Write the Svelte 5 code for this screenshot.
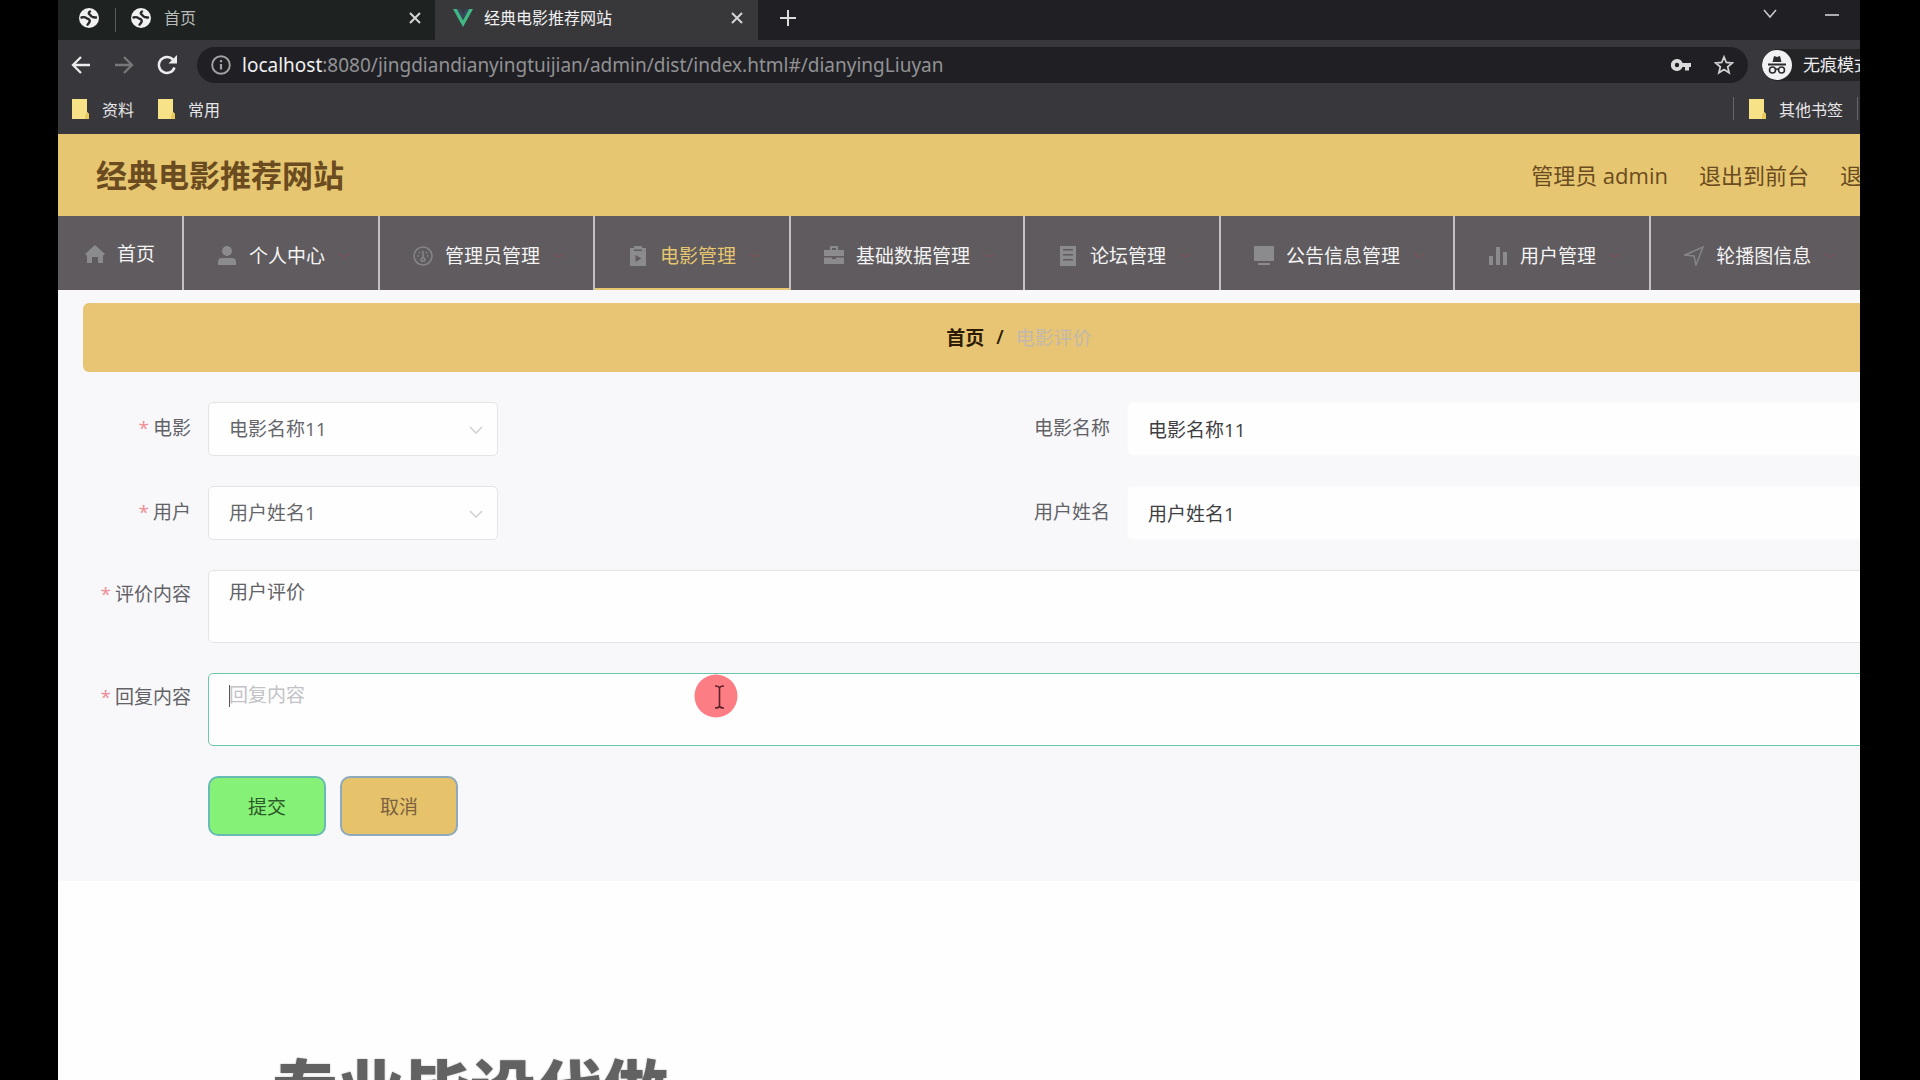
<script>
  const menu = [
    { label: '个人中心', icon: 'user' },
    { label: '管理员管理', icon: 'gauge' },
    { label: '电影管理', icon: 'film', active: true },
    { label: '基础数据管理', icon: 'case' },
    { label: '论坛管理', icon: 'list' },
    { label: '公告信息管理', icon: 'screen' },
    { label: '用户管理', icon: 'bars' },
    { label: '轮播图信息', icon: 'plane' }
  ];
  let movieName = $state('电影名称11');
  let userName = $state('用户姓名1');
  let review = $state('用户评价');
  let reply = $state('');
</script>

{#snippet globe()}
  <svg class="globe" viewBox="0 0 20 20" aria-hidden="true">
    <circle cx="10" cy="10" r="10" fill="#f1f1f2" />
    <path d="M2.500 9.500c2-.6 3.800-.4 5 .6 1.200 1 2.900.9 3.200 2.300.3 1.500-.8 2.800-2.200 4.300M11 3.500c-1.400.8-1.600 2-.6 2.800 1.300.9 1.600 2.500 3.300 2.700 1.300.1 2 .6 3.300.5" fill="none" stroke="#27292a" stroke-width="2.400" stroke-linecap="round" stroke-linejoin="round" />
  </svg>
{/snippet}

{#snippet folder()}
  <svg class="folder" viewBox="0 0 17 20" aria-hidden="true">
    <path d="M0 0h15v13l2 2v5H0z" fill="#f8e287" />
    <path d="M13 20v-4l2-3 2 2v5z" fill="#e8c95c" />
  </svg>
{/snippet}

{#snippet cross()}
  <svg class="cross" viewBox="0 0 12 12" aria-hidden="true"><path d="M1 1l10 10M11 1L1 11" /></svg>
{/snippet}

<div class="stage">
  <div class="browser">
    <div class="tabs">
      <div class="tab pinned">{@render globe()}</div>
      <div class="tab idle">
        {@render globe()}
        <span class="tab-title">首页</span>
        <button class="plain" aria-label="关闭标签页">{@render cross()}</button>
      </div>
      <div class="tab current">
        <svg class="vue" viewBox="0 0 20 18" aria-hidden="true">
          <path d="M0 0h4l6 11 6-11h4L10 18z" fill="#41b883" />
          <path d="M4 0h3l3 5.500L13 0h3l-6 11z" fill="#35495e" />
        </svg>
        <span class="tab-title">经典电影推荐网站</span>
        <button class="plain" aria-label="关闭标签页">{@render cross()}</button>
      </div>
      <button class="plain new-tab" aria-label="新标签页">
        <svg width="16" height="16" viewBox="0 0 16 16"><path d="M8 0v16M0 8h16" stroke="#dcdcde" stroke-width="2" /></svg>
      </button>
      <div class="window-buttons">
        <button class="plain" aria-label="搜索标签页">
          <svg width="14" height="10" viewBox="0 0 14 10"><path d="M1 1l6 7 6-7" fill="none" stroke="#c9c9cc" stroke-width="1.500" /></svg>
        </button>
        <button class="plain" aria-label="最小化">
          <svg width="14" height="10" viewBox="0 0 14 10"><path d="M0 6h14" stroke="#dcdcde" stroke-width="1.500" /></svg>
        </button>
      </div>
    </div>

    <div class="toolbar">
      <div class="nav-buttons">
        <button class="plain" aria-label="后退">
          <svg width="20" height="20" viewBox="0 0 20 20"><path d="M19 10H2M10 2l-8 8 8 8" fill="none" stroke="#ececee" stroke-width="2.300" /></svg>
        </button>
        <button class="plain" aria-label="前进">
          <svg width="20" height="20" viewBox="0 0 20 20"><path d="M1 10h17M10 2l8 8-8 8" fill="none" stroke="#77777a" stroke-width="2.300" /></svg>
        </button>
        <button class="plain" aria-label="重新加载">
          <svg width="20" height="20" viewBox="0 0 20 20"><path d="M17.500 12.500A8 8 0 1 1 16 4.700" fill="none" stroke="#ececee" stroke-width="2.500" /><path d="M20 0v8.500h-8.500z" fill="#ececee" /></svg>
        </button>
      </div>
      <div class="address">
        <svg width="20" height="20" viewBox="0 0 20 20" aria-hidden="true"><circle cx="10" cy="10" r="8.800" fill="none" stroke="#a2a2a5" stroke-width="1.900" /><path d="M10 9v5.500M10 5v2.200" stroke="#a2a2a5" stroke-width="2.200" /></svg>
        <div class="url"><b>localhost</b>:8080/jingdiandianyingtuijian/admin/dist/index.html#/dianyingLiuyan</div>
        <svg class="key" width="20" height="12" viewBox="0 0 20 12" aria-hidden="true"><path d="M6 0a6 6 0 1 0 5.500 8H14v3.500h4V8h2V4h-8.500A6 6 0 0 0 6 0zm0 3.800a2.200 2.200 0 1 1 0 4.400 2.200 2.200 0 0 1 0-4.400z" fill="#dadadc" fill-rule="evenodd" /></svg>
        <svg width="20" height="20" viewBox="0 0 20 20" aria-hidden="true"><path d="M10 2l2.300 5.500 6 .5-4.600 3.900 1.400 5.900-5.100-3.200-5.100 3.200 1.400-5.900L1.700 8l6-.5z" fill="none" stroke="#cfcfd2" stroke-width="1.800" /></svg>
      </div>
      <div class="incognito">
        <svg width="30" height="30" viewBox="0 0 30 30" aria-hidden="true">
          <circle cx="15" cy="15" r="15" fill="#f1f1f3" />
          <path d="M10.500 12l1.500-6 3 1 3-1 1.500 6z" fill="#2b2b2e" />
          <path d="M6 14.500h18" stroke="#2b2b2e" stroke-width="1.800" />
          <g fill="none" stroke="#2b2b2e" stroke-width="1.600"><circle cx="10.500" cy="20" r="3" /><circle cx="19.500" cy="20" r="3" /><path d="M13.500 19.500q1.500-1 3 0" /></g>
        </svg>
        <span>无痕模式</span>
      </div>
    </div>

    <div class="bookmarks">
      <a href="#/ziliao">{@render folder()}资料</a>
      <a href="#/changyong">{@render folder()}常用</a>
      <a class="others" href="#/others">{@render folder()}其他书签</a>
    </div>

    <div class="page">
      <header>
        <h1>经典电影推荐网站</h1>
        <div class="account">
          <span>管理员 admin</span>
          <a href="#/front">退出到前台</a>
          <a href="#/logout">退出登录</a>
        </div>
      </header>

      <nav>
        <a class="home" href="#/">
          <svg class="icon" viewBox="0 0 20 20" aria-hidden="true"><path d="M10 1l10 9-1.500 1.500L18 11v8h-5v-6H7v6H2v-8l-.5.500L0 10z" /></svg>
          <span>首页</span>
        </a>
        {#each menu as item}
          <a class:active={item.active} href="#/{item.icon}">
            <svg class="icon" viewBox="0 0 20 20" aria-hidden="true">
              {#if item.icon === 'user'}
                <circle cx="10" cy="5" r="5" /><path d="M1 19v-3q0-4 4-4h10q4 0 4 4v3z" />
              {:else if item.icon === 'gauge'}
                <g fill="none" stroke="#858487" stroke-width="1.600"><circle cx="10" cy="10" r="9" /><path d="M10 5v7M4.500 10h1.500M14 10h1.500M6 6l1 1M14 6l-1 1" /><circle cx="10" cy="13.500" r="1.800" /></g>
              {:else if item.icon === 'film'}
                <path fill-rule="evenodd" d="M2 2h4V0h8v2h4v18H2zm4 3h8V3.500H6zm1.500 4v7l6-3.500z" />
              {:else if item.icon === 'case'}
                <path fill-rule="evenodd" d="M6 4V0h8v4h6v6H0V4zm2 0h4V2H8zM0 11.500h8V13h4v-1.500h8V18H0z" />
              {:else if item.icon === 'list'}
                <path fill-rule="evenodd" d="M2 0h16v20H2zm3 3v1.500h10V3zm0 5v1.500h10V8zm0 5v1.500h10V13z" />
              {:else if item.icon === 'screen'}
                <path d="M0 0h20v15H0zM4 17h12v2H4z" />
              {:else if item.icon === 'bars'}
                <path d="M1 10h4v9H1zM8 1h4v18H8zM15 6h4v13h-4z" />
              {:else}
                <path d="M1 9L19 1 12 19l-2-9z" fill="none" stroke="#858487" stroke-width="1.500" />
              {/if}
            </svg>
            <span>{item.label}</span>
            <svg class="arrow" viewBox="0 0 14 8" aria-hidden="true"><path d="M2 2l5 3 5-3" /></svg>
          </a>
        {/each}
      </nav>

      <main>
        <div class="crumbs">
          <a href="#/">首页</a><b>/</b><span>电影评价</span>
        </div>

        <form>
          <div class="field">
            <label for="movie"><i>*</i>电影</label>
            <div class="select">
              <select id="movie"><option>电影名称11</option></select>
              <svg viewBox="0 0 14 8" aria-hidden="true"><path d="M1 1l6 6 6-6" /></svg>
            </div>
          </div>
          <div class="field">
            <label for="movie-name">电影名称</label>
            <input id="movie-name" type="text" bind:value={movieName} />
          </div>
          <div class="field">
            <label for="user"><i>*</i>用户</label>
            <div class="select">
              <select id="user"><option>用户姓名1</option></select>
              <svg viewBox="0 0 14 8" aria-hidden="true"><path d="M1 1l6 6 6-6" /></svg>
            </div>
          </div>
          <div class="field">
            <label for="user-name">用户姓名</label>
            <input id="user-name" type="text" bind:value={userName} />
          </div>
          <div class="field wide">
            <label for="review"><i>*</i>评价内容</label>
            <textarea id="review" bind:value={review}></textarea>
          </div>
          <div class="field wide">
            <label for="reply"><i>*</i>回复内容</label>
            <div class="reply">
              <textarea id="reply" class="focused" placeholder="回复内容" bind:value={reply}></textarea>
              <span class="caret"></span>
              <svg class="pointer" viewBox="0 0 44 44" aria-hidden="true">
                <circle cx="22" cy="22" r="21.500" fill="#fd7d84" />
                <path d="M21 12q4 0 4.500 2 .5-2 4.500-2M25.500 13v20M21 34q4 0 4.500-2 .5 2 4.500 2" fill="none" stroke="#5a2328" stroke-width="1.600" />
              </svg>
            </div>
          </div>
          <div class="actions">
            <button type="button" class="submit">提交</button>
            <button type="button" class="cancel">取消</button>
          </div>
        </form>
      </main>
    </div>
    <div class="banner">专业毕设代做</div>
  </div>
</div>

<style>
  :global(body) { margin: 0; background: #000; }
  .stage, .stage * { box-sizing: border-box; }
  .stage {
    height: 100vh;
    padding: 0 60px 0 58px;
    background: #000;
    font-family: "Open Sans", "Noto Sans CJK SC", sans-serif;
    overflow: hidden;
  }
  .browser { height: 100%; display: flex; flex-direction: column; background: #fefefe; overflow: hidden; }
  .browser > * { flex-shrink: 0; }
  svg { display: block; flex-shrink: 0; }
  a { color: inherit; text-decoration: none; }
  button, input, select, textarea { font: inherit; }
  .plain { border: 0; padding: 0; background: none; }

  .tabs { display: flex; height: 40px; background: #202024; color: #b9bbba; font-size: 16px; }
  .tab { display: flex; align-items: center; height: 40px; padding-bottom: 5px; background: #1e2321; }
  .globe { width: 20px; height: 20px; }
  .pinned { width: 58px; padding-left: 21px; background: linear-gradient(#57595a, #57595a) right 8px / 1px 24px no-repeat #1e2321; }
  .idle { width: 319px; padding-left: 15px; padding-right: 14px; border-bottom-right-radius: 8px; }
  .tab-title { flex: 1; padding-left: 13px; line-height: 24px; }
  .current { width: 323px; padding-left: 18px; padding-right: 15px; background: #38383b; color: #f0f0f1; }
  .vue { width: 20px; height: 18px; }
  .current .tab-title { padding-left: 11px; }
  .cross { width: 12px; height: 12px; }
  .cross path { stroke: #d4d5d5; stroke-width: 2; }
  .new-tab { padding: 0 22px 4px; }
  .window-buttons { display: flex; gap: 48px; margin-left: auto; padding: 0 21px 12px 0; }

  .toolbar { display: flex; align-items: center; height: 50px; background: #38373b; }
  .nav-buttons { display: flex; gap: 23px; padding: 0 20px 0 13px; }
  .address { flex: 1; display: flex; align-items: center; height: 36px; padding: 0 14px 0 14px; border-radius: 18px; background: #202024; }
  .url { flex: 1; padding-left: 11px; font-family: "Noto Sans", sans-serif; font-size: 19px; line-height: 26px; color: #929295; white-space: nowrap; }
  .url b { font-weight: 400; color: #f0f0f2; }
  .key { margin-right: 23px; }
  .incognito { display: flex; align-items: center; gap: 11px; width: 98px; height: 32px; margin-left: 14px; border-radius: 16px 0 0 16px; background: #242427; color: #ececee; font-size: 17px; line-height: 28px; white-space: nowrap; overflow: hidden; }

  .bookmarks { display: flex; height: 44px; padding: 0 2px 7px 14px; gap: 24px; background: #38373b; color: #e6e6e8; font-size: 16px; }
  .bookmarks a { display: flex; align-items: center; gap: 13px; }
  .folder { width: 17px; height: 20px; }
  .bookmarks .others { margin: 7px 0 7px auto; padding: 0 14px 0 15px; border: solid #67676b; border-width: 0 1px; }

  .page { width: calc(100% + 120px); background: #f8f8fb; }
  header { display: flex; align-items: center; justify-content: space-between; height: 82px; padding: 0 52px 0 38px; background: #e6c670; color: #6b4b20; }
  h1 { margin: 0; font-size: 31px; line-height: 44px; font-weight: 700; }
  .account { display: flex; gap: 31px; font-size: 22px; line-height: 32px; }

  nav { display: flex; height: 74px; background: #5f5b5e; color: #f4f4f4; font-size: 19px; }
  nav a { display: flex; align-items: center; gap: 12px; padding: 6px 27px 0 33px; border-right: 2px solid #c3c1c3; white-space: nowrap; }
  nav .home { padding: 2px 27px 0 27px; }
  nav .active { padding-top: 8px; border-bottom: 2px solid #e6c670; color: #e6c670; }
  nav span { line-height: 28px; }
  .icon { width: 20px; height: 20px; fill: #8b8a8d; }
  .arrow { width: 14px; height: 8px; }
  .arrow path { fill: none; stroke: #86505a; stroke-width: 1; }

  main { padding: 13px 25px 45px; }
  .crumbs { display: flex; align-items: center; justify-content: center; gap: 12px; height: 69px; padding-bottom: 2px; border-radius: 6px; background: #e8c574; color: #2c1b05; font-size: 19px; font-weight: 700; }
  .crumbs b { font-weight: 600; }
  .crumbs span { color: #c2b8ab; font-weight: 400; }

  form { display: grid; grid-template-columns: 1fr 1fr; gap: 30px 0; padding: 30px 19px 0 15px; font-size: 19px; color: #626266; }
  .field { display: grid; grid-template-columns: 110px minmax(0, 1fr); }
  .wide, .actions { grid-column: 1 / -1; }
  label { padding-right: 17px; line-height: 52px; text-align: right; white-space: nowrap; }
  .wide label { line-height: 48px; }
  label i { margin-right: 4px; color: #ee8d96; font-style: normal; }
  .select { position: relative; width: 290px; }
  select, input, textarea { display: block; width: 100%; border: 1px solid #e4e4e8; border-radius: 5px; background: #fefefe; outline: 0; }
  select, input { height: 54px; padding: 0 20px; color: #66666a; }
  select { appearance: none; }
  input { border-color: #fafafc; color: #3f3f43; }
  .select svg { position: absolute; right: 15px; top: 24px; width: 14px; height: 8px; }
  .select path { fill: none; stroke: #cfcfd4; stroke-width: 1.500; }
  textarea { height: 73px; padding: 7px 20px; line-height: 28px; color: #626266; resize: none; }
  .focused { border-color: #6cc6a8; }
  .focused::placeholder { color: #c2c2c7; opacity: 1; }
  .reply { position: relative; }
  .caret { position: absolute; left: 21px; top: 12px; width: 1px; height: 22px; background: #55555a; }
  .pointer { position: absolute; left: 486px; top: 1px; width: 44px; height: 44px; }
  .actions { display: flex; gap: 14px; padding-left: 110px; }
  .actions button { width: 118px; height: 60px; border: 2px solid #77b0b8; border-radius: 10px; }
  .submit { background: #86f177; color: #2c5a28; }
  .actions .submit { border-color: #67bbb4; }
  .cancel { background: #e6c36b; color: #7c6142; }
  .actions .cancel { border-color: #8ca9bd; }

  .banner { margin-top: 168px; padding-left: 214px; height: 80px; font-size: 66px; line-height: 80px; font-weight: 900; color: #626262; white-space: nowrap; text-shadow: 0 0 2px #b5b5b5; }
</style>
